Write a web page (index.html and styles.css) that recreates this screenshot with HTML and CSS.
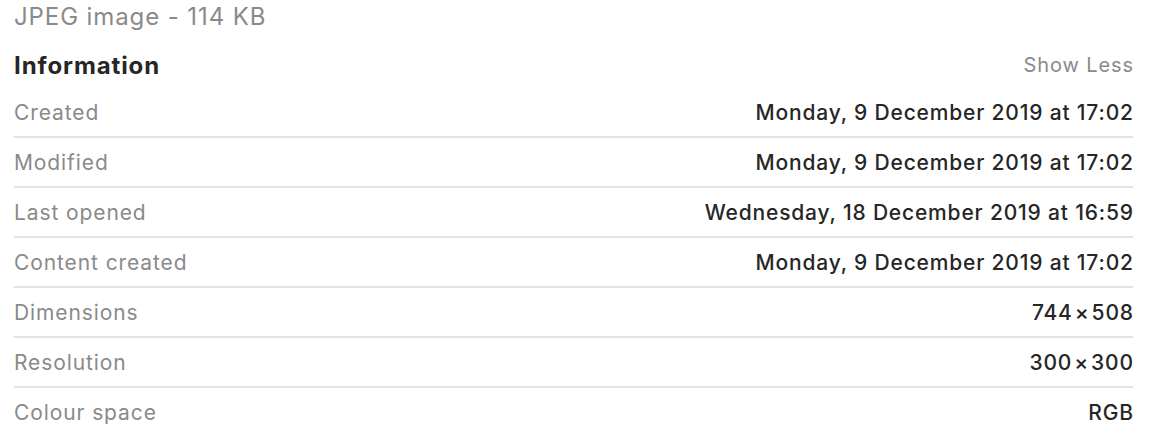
FILE: index.html
```html
<!DOCTYPE html>
<html>
<head>
<meta charset="utf-8">
<link rel="stylesheet" href="styles.css">
</head>
<body>
<div class="panel">
  <div class="kind">JPEG image - 114 KB</div>
  <div class="header">
    <div class="title">Information</div>
    <div class="toggle">Show Less</div>
  </div>
  <div class="rows">
    <div class="row"><span class="label">Created</span><span class="value">Monday, 9 December 2019 at 17:02</span></div>
    <div class="row"><span class="label">Modified</span><span class="value">Monday, 9 December 2019 at 17:02</span></div>
    <div class="row"><span class="label">Last opened</span><span class="value">Wednesday, 18 December 2019 at 16:59</span></div>
    <div class="row"><span class="label">Content created</span><span class="value">Monday, 9 December 2019 at 17:02</span></div>
    <div class="row"><span class="label">Dimensions</span><span class="value">744<span class="times">×</span>508</span></div>
    <div class="row"><span class="label">Resolution</span><span class="value">300<span class="times">×</span>300</span></div>
    <div class="row last"><span class="label">Colour space</span><span class="value">RGB</span></div>
  </div>
</div>
</body>
</html>
```
FILE: styles.css
```css
html, body {
  margin: 0;
  padding: 0;
  background: #ffffff;
}
body {
  font-family: Inter, "Liberation Sans", sans-serif;
  -webkit-font-smoothing: antialiased;
}
.panel {
  width: 1119px;
  padding-left: 14px;
}
.kind {
  height: 34px;
  line-height: 34px;
  font-size: 24px;
  letter-spacing: 0.9px;
  color: #8a8a8a;
}
.header {
  display: flex;
  justify-content: space-between;
  align-items: center;
  height: 46px;
  padding-top: 8px;
}
.title {
  font-size: 24px;
  font-weight: 700;
  letter-spacing: 0.9px;
  color: #262626;
}
.toggle {
  font-size: 20px;
  letter-spacing: 0.9px;
  margin-right: -0.9px;
  color: #8a8a8a;
}
.row {
  display: flex;
  justify-content: space-between;
  align-items: center;
  height: 48px;
  border-bottom: 2px solid #e3e3e3;
}
.row.last {
  border-bottom: none;
}
.label {
  font-size: 21px;
  letter-spacing: 0.9px;
  color: #8a8a8a;
}
.value {
  font-size: 21px;
  font-weight: 500;
  letter-spacing: 0.82px;
  margin-right: -0.8px;
  color: #262626;
}
.times {
  margin: 0 2px;
}
```
